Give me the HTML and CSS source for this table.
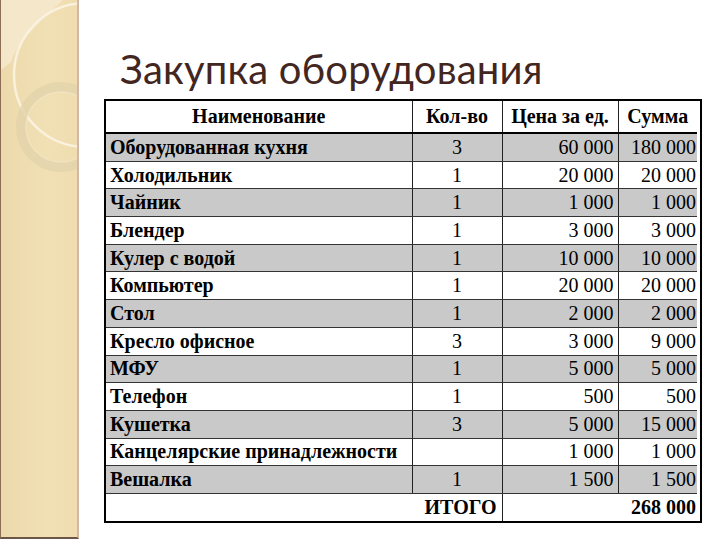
FILE: index.html
```html
<!DOCTYPE html>
<html lang="ru">
<head>
<meta charset="utf-8">
<title>Закупка оборудования</title>
<link rel="stylesheet" href="styles.css">
</head>
<body>
<div class="slide">
  <aside class="side">
    <svg class="decor" width="76" height="540" viewBox="0 0 76 540">
      <path d="M0 0 H62 C40 20 18 40 10 62 L0 70 Z" fill="#f6ead0" opacity="0.8"/>
      <circle cx="85" cy="75" r="72" fill="none" stroke="#fbf3e2" stroke-width="2.5" opacity="0.9"/>
      <circle cx="60" cy="127" r="40" fill="none" stroke="#e3d3ab" stroke-width="10" opacity="0.8"/>
      <circle cx="60" cy="127" r="35" fill="none" stroke="#f3e7c8" stroke-width="1.5" opacity="0.7"/>
    </svg>
  </aside>
  <main class="content">
    <h1 class="title">Закупка оборудования</h1>
    <div class="table-wrap">
      <table class="grid">
        <colgroup>
          <col class="c-name"><col class="c-qty"><col class="c-price"><col class="c-sum">
        </colgroup>
        <thead>
          <tr><th>Наименование</th><th>Кол-во</th><th>Цена за ед.</th><th>Сумма</th></tr>
        </thead>
        <tbody>
          <tr class="odd"><td class="name">Оборудованная кухня</td><td class="qty">3</td><td class="num">60 000</td><td class="num">180 000</td></tr>
          <tr><td class="name">Холодильник</td><td class="qty">1</td><td class="num">20 000</td><td class="num">20 000</td></tr>
          <tr class="odd"><td class="name">Чайник</td><td class="qty">1</td><td class="num">1 000</td><td class="num">1 000</td></tr>
          <tr><td class="name">Блендер</td><td class="qty">1</td><td class="num">3 000</td><td class="num">3 000</td></tr>
          <tr class="odd"><td class="name">Кулер с водой</td><td class="qty">1</td><td class="num">10 000</td><td class="num">10 000</td></tr>
          <tr><td class="name">Компьютер</td><td class="qty">1</td><td class="num">20 000</td><td class="num">20 000</td></tr>
          <tr class="odd"><td class="name">Стол</td><td class="qty">1</td><td class="num">2 000</td><td class="num">2 000</td></tr>
          <tr><td class="name">Кресло офисное</td><td class="qty">3</td><td class="num">3 000</td><td class="num">9 000</td></tr>
          <tr class="odd"><td class="name">МФУ</td><td class="qty">1</td><td class="num">5 000</td><td class="num">5 000</td></tr>
          <tr><td class="name">Телефон</td><td class="qty">1</td><td class="num">500</td><td class="num">500</td></tr>
          <tr class="odd"><td class="name">Кушетка</td><td class="qty">3</td><td class="num">5 000</td><td class="num">15 000</td></tr>
          <tr><td class="name">Канцелярские принадлежности</td><td class="qty"></td><td class="num">1 000</td><td class="num">1 000</td></tr>
          <tr class="odd"><td class="name">Вешалка</td><td class="qty">1</td><td class="num">1 500</td><td class="num">1 500</td></tr>
          <tr class="total"><td colspan="2" class="total-label">ИТОГО</td><td colspan="2" class="total-value">268 000</td></tr>
        </tbody>
      </table>
    </div>
  </main>
</div>
</body>
</html>
```

FILE: styles.css
```css
html, body {
  margin: 0;
  padding: 0;
  background: #ffffff;
}
body {
  width: 720px;
  height: 540px;
  overflow: hidden;
}
.slide {
  display: flex;
  width: 720px;
  height: 540px;
}
.side {
  flex: none;
  width: 76px;
  height: 537px;
  background: linear-gradient(90deg, #ecdaac 0%, #f1e0b4 60%, #efddb0 100%);
  border-left: 1px solid #8c6e55;
  border-right: 2px solid #d3b6a5;
  border-bottom: 2px solid #6d5646;
  overflow: hidden;
}
.decor {
  display: block;
}
.content {
  flex: 1;
  padding-left: 25px;
}
.title {
  margin: 0;
  padding-top: 45px;
  padding-left: 16px;
  height: 48px;
  font-family: Lato, "Open Sans", sans-serif;
  font-weight: normal;
  font-size: 40px;
  line-height: 48px;
  letter-spacing: 0.2px;
  color: #42261f;
  margin-bottom: 6px;
  white-space: nowrap;
}
.table-wrap {
  width: 591px;
  border: 2px solid #000;
  padding-right: 3px;
  background: #fff;
}
.grid {
  width: 591px;
  border-collapse: collapse;
  table-layout: fixed;
  font-family: "Liberation Serif", "Times New Roman", serif;
  font-size: 20px;
  color: #000;
}
.c-name { width: 306px; }
.c-qty { width: 90px; }
.c-price { width: 116px; }
.c-sum { width: 79px; }
.grid th {
  height: 31px;
  padding: 0;
  font-weight: bold;
  text-align: center;
  border-left: 1px solid #222;
  border-bottom: 2px solid #000;
}
.grid th:first-child { border-left: none; }
.grid td {
  height: 26.7px;
  padding: 0;
  border-left: 1px solid #222;
  border-bottom: 1px solid #333;
  white-space: nowrap;
}
.grid td:first-child { border-left: none; }
.grid tr.odd td { background: #c9c9c9; }
.grid td.name {
  font-weight: bold;
  padding-left: 4px;
  text-align: left;
}
.grid td.qty { text-align: center; }
.grid td.num {
  text-align: right;
  padding-right: 4px;
}
.grid td.num:last-child { padding-right: 1px; }
.grid tr.total td {
  border-bottom: none;
  font-weight: bold;
  text-align: right;
}
.grid td.total-label { padding-right: 5px; }
.grid td.total-value { padding-right: 1px; }
```
